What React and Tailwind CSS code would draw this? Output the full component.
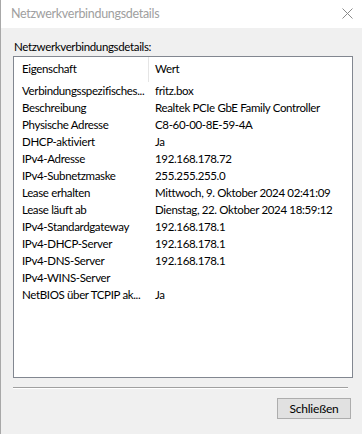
const rows = [
  ["Verbindungsspezifisches...", "fritz.box"],
  ["Beschreibung", "Realtek PCIe GbE Family Controller"],
  ["Physische Adresse", "C8-60-00-8E-59-4A"],
  ["DHCP-aktiviert", "Ja"],
  ["IPv4-Adresse", "192.168.178.72"],
  ["IPv4-Subnetzmaske", "255.255.255.0"],
  ["Lease erhalten", "Mittwoch, 9. Oktober 2024 02:41:09"],
  ["Lease läuft ab", "Dienstag, 22. Oktober 2024 18:59:12"],
  ["IPv4-Standardgateway", "192.168.178.1"],
  ["IPv4-DHCP-Server", "192.168.178.1"],
  ["IPv4-DNS-Server", "192.168.178.1"],
  ["IPv4-WINS-Server", ""],
  ["NetBIOS über TCPIP ak...", "Ja"],
];

export default function App() {
  return (
    <div
      className="flex h-[434px] w-[362px] flex-col border-l border-[#a8a8a8] bg-[#f0f0f0] text-[11.5px] tracking-[-0.35px] text-black"
      style={{ fontFamily: 'Lato, "Liberation Sans", sans-serif' }}
    >
      {/* title bar */}
      <div className="flex h-[28px] items-center justify-between bg-white pl-[10px] pr-[9px]">
        <span className="text-[12.5px] tracking-[-0.3px] text-[#a0a0a0]">Netzwerkverbindungsdetails</span>
        <svg width="11" height="11" viewBox="0 0 11 11" className="mb-[1px]">
          <path d="M0.5 0.5 L10.5 10.5 M10.5 0.5 L0.5 10.5" stroke="#8a8a8a" strokeWidth="1" fill="none" />
        </svg>
      </div>

      <div className="flex flex-1 flex-col px-[12px]">
        <div className="mt-[11px] h-[16px] pl-[1px] leading-[16px]">Netzwerkverbindungsdetails:</div>

        {/* list view */}
        <div className="mt-[1px] h-[322px] w-[340px] border border-[#828790] bg-white">
          <div className="flex h-[25px] items-stretch">
            <div className="flex w-[135px] items-center border-r border-[#e5e5e5] pb-[1px] pl-[8px]">
              Eigenschaft
            </div>
            <div className="flex items-center pb-[1px] pl-[6px]">Wert</div>
          </div>
          {rows.map(([k, v]) => (
            <div key={k} className="flex h-[17px] items-center">
              <div className="w-[135px] overflow-hidden whitespace-nowrap pl-[8px]">{k}</div>
              <div className="whitespace-nowrap pl-[6px]">{v}</div>
            </div>
          ))}
        </div>

        <div className="mt-[9px] mr-[2px] h-[2px] border-t border-b border-t-[#a0a0a0] border-b-white" />

        <div className="mt-[9px] flex justify-end">
          <button className="h-[21px] w-[74px] -mr-[1px] border border-[#adadad] bg-[#e1e1e1] text-[12px] tracking-[-0.2px] text-black">
            Schließen
          </button>
        </div>
      </div>
    </div>
  );
}
